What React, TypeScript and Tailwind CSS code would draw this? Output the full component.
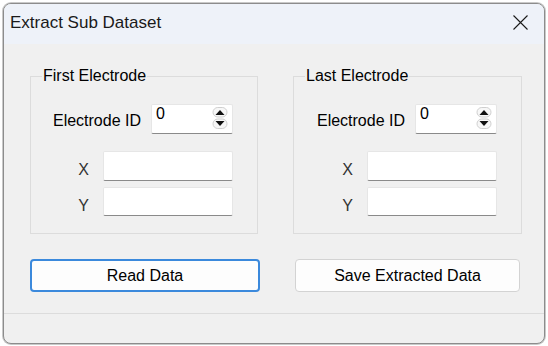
import React from "react";

function Spinner() {
  return (
    <div className="relative w-[82px] h-[30px] bg-white border border-[#e6e6e6] border-b-[#8a8a8a] rounded-[2px] pl-[4px] text-[16px] leading-[18px] text-black">
      0
      <svg className="absolute right-[4px] top-[2px]" width="16" height="23" viewBox="0 0 16 23">
        <rect x="1" y="0.5" width="14" height="9.5" rx="4.75" fill="#f7f7f7" stroke="#cfcfcf" />
        <polygon points="3.5,8 8,3 12.5,8" fill="#111" />
        <rect x="1" y="12" width="14" height="9.5" rx="4.75" fill="#f7f7f7" stroke="#cfcfcf" />
        <polygon points="3.5,14 12.5,14 8,19" fill="#111" />
      </svg>
    </div>
  );
}

function TextBox({ h }: { h: string }) {
  return <div className={`w-[130px] ${h} bg-white border border-[#e6e6e6] border-b-[#8a8a8a] rounded-[2px]`} />;
}

function Group({ title, w }: { title: string; w: string }) {
  return (
    <fieldset className={`${w} border border-[#dcdcdc] pr-[24px] pb-[17px] pt-[19px]`}>
      <legend className="ml-[11px] px-[1px] text-[16px] leading-[18px] text-black">{title}</legend>
      <div className="flex justify-end items-center gap-[10px]">
        <span className="text-[16px] leading-[18px] text-black pt-[3px]">Electrode ID</span>
        <Spinner />
      </div>
      <div className="flex justify-end items-center gap-[14px] mt-[17px]">
        <span className="text-[16px] leading-[18px] text-[#333] pt-[8px]">X</span>
        <TextBox h="h-[30px]" />
      </div>
      <div className="flex justify-end items-center gap-[14px] mt-[6px]">
        <span className="text-[16px] leading-[18px] text-[#333] pt-[8px]">Y</span>
        <TextBox h="h-[29px]" />
      </div>
    </fieldset>
  );
}

export default function App() {
  return (
    <div className="w-[548px] h-[346px] bg-white pt-[3px] px-[3px] pb-[2px] font-['Liberation_Sans',Arial,sans-serif]">
      <div className="h-full flex flex-col rounded-[8px] border border-[#8c8c8c] overflow-hidden bg-[#f0f0f0] shadow-[0_0_0_1px_#c9c9c9]">
        <div className="h-[40px] shrink-0 bg-[#eef2f9] flex items-center justify-between pl-[6px] pr-[16px]">
          <span className="text-[17px] text-[#1a1a1a] leading-[20px] -mt-[2px]">Extract Sub Dataset</span>
          <svg width="15" height="15" viewBox="0 0 15 15" className="-mt-[3px]">
            <path d="M0.5 0.5 L14.5 14.5 M14.5 0.5 L0.5 14.5" stroke="#1a1a1a" strokeWidth="1.1" fill="none" />
          </svg>
        </div>
        <div className="flex-1 flex flex-col">
          <div className="flex gap-[35px] pl-[26px] pt-[23px]">
            <Group title="First Electrode" w="w-[228px]" />
            <Group title="Last Electrode" w="w-[229px]" />
          </div>
          <div className="flex gap-[35px] pl-[26px] mt-[25px]">
            <button className="w-[230px] h-[33px] bg-[#fdfdfd] border-2 border-[#3b89dc] rounded-[4px] text-[16px] text-black">
              Read Data
            </button>
            <button className="w-[225px] h-[33px] bg-[#fdfdfd] border border-[#d3d3d3] rounded-[4px] text-[16px] text-black">
              Save Extracted Data
            </button>
          </div>
          <div className="mt-auto h-[30px] border-t border-[#dcdcdc]" />
        </div>
      </div>
    </div>
  );
}
